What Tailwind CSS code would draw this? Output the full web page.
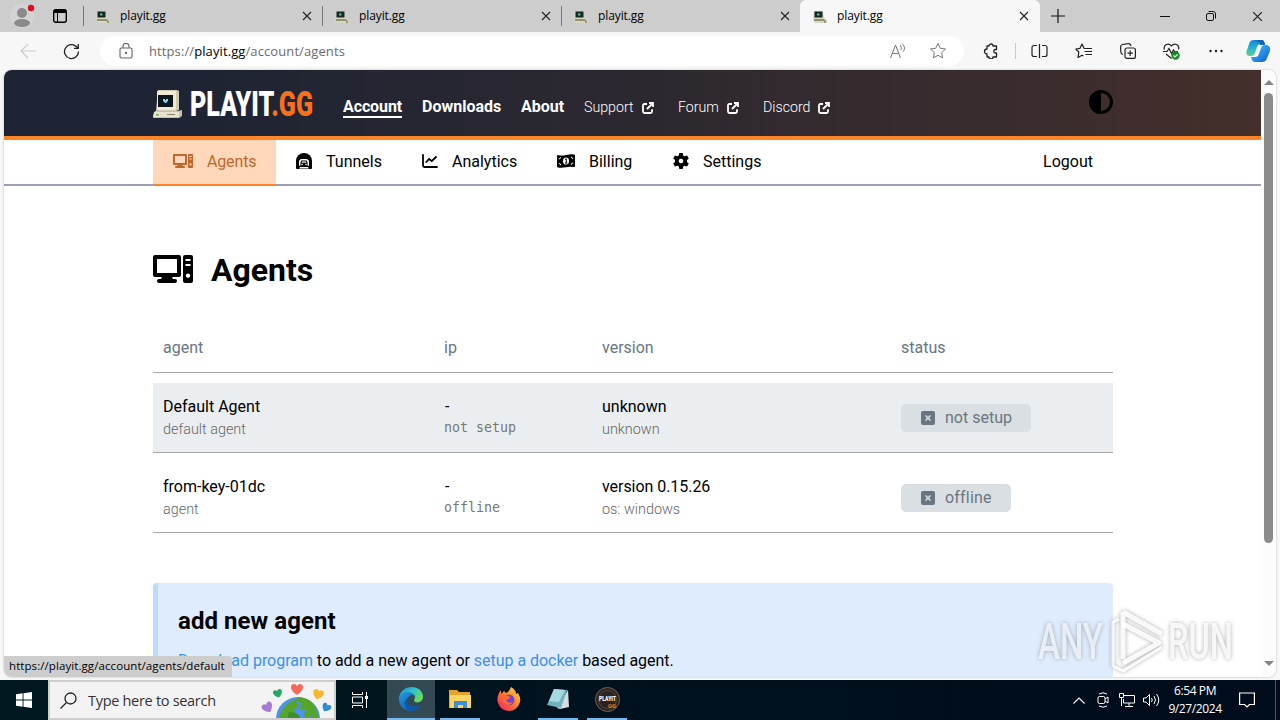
<!DOCTYPE html>
<html lang="en">
<head>
  <meta charset="UTF-8">
  <meta name="viewport" content="width=device-width, initial-scale=1.0">
  <script src="https://cdn.jsdelivr.net/npm/@tailwindcss/browser@4"></script>
  <title>playit.gg</title>
</head>
<body class="w-[1280px] h-[720px] overflow-hidden bg-[#f7f7f7] font-['Roboto',sans-serif] text-black">

  <!-- shared icons -->
  <svg class="hidden">
    <symbol id="computer" viewBox="0 0 40 28">
      <path fill-rule="evenodd" d="M2 0h24a2 2 0 0 1 2 2v18a2 2 0 0 1-2 2h-7l1 2h2a2 2 0 0 1 0 4H6a2 2 0 0 1 0-4h2l1-2H2a2 2 0 0 1-2-2V2a2 2 0 0 1 2-2zM4 4v14h20V4zM32 0h6a2 2 0 0 1 2 2v24a2 2 0 0 1-2 2h-6a2 2 0 0 1-2-2V2a2 2 0 0 1 2-2zM32.500 4v2h5V4zM32.500 9v2h5V9zM35 18.500a2.200 2.200 0 1 0 .01 0z" fill="currentColor"/>
    </symbol>
    <symbol id="external" viewBox="0 0 12 12">
      <path d="M5 2H2.500Q1 2 1 3.500V9.500Q1 11 2.500 11H8.500Q10 11 10 9.500V7.300M7 1h4v4M11 1L5 7" fill="none" stroke="currentColor" stroke-width="1.800"/>
    </symbol>
    <symbol id="retro" viewBox="0 0 30 28">
      <path d="M5 0h19l2 1v19l-3 1H3z" fill="#cfc8b2"/>
      <path d="M4 1h19v19H4z" fill="#efe9d6"/>
      <path d="M5 5h15v12H5z" fill="#0d161d"/>
      <path d="M10 9h2v1h1v-1h2v2l-2 2h-1l-2-2z" fill="#7fd4ee"/>
      <path d="M2 21h23l4-1v6l-3 2H0l1-5z" fill="#c9c2aa"/>
      <path d="M1 22h25v5H0z" fill="#e9e3cf"/>
      <path d="M3 24h3v1.500H3z" fill="#6fae4e"/>
      <path d="M14 24h8v1h-8z" fill="#8b856f"/>
    </symbol>
    <symbol id="tabicon" viewBox="0 0 14 13">
      <path d="M1 1h9l1 7 3 2v3H2l-2-3z" fill="#d9d6c0"/>
      <path d="M1.500 1.500h8v6h-8z" fill="#12291f"/>
      <path d="M4 3.500h2.500v2H4z" fill="#6fb7a8"/>
      <path d="M1 9h10v2H1z" fill="#8d9278"/>
      <path d="M11 9l2 2v2h-2z" fill="#9b977d"/>
    </symbol>
    <symbol id="close" viewBox="0 0 10 10">
      <path d="M1 1l8 8M9 1L1 9" fill="none" stroke="#222" stroke-width="1.100"/>
    </symbol>
    <symbol id="xmark" viewBox="0 0 14 14">
      <rect width="14" height="14" rx="2" fill="#697681"/>
      <path d="M4.500 4.500l5 5M9.500 4.500l-5 5" stroke="#dce2e7" stroke-width="1.500"/>
    </symbol>
  </svg>

  <!-- tab strip -->
  <div class="flex h-8 bg-[#cdcdcd] font-['Open_Sans',sans-serif] text-[12px] tracking-[-0.1px]">
    <div class="w-[44px] flex items-center justify-end pr-[8px]">
      <svg class="w-7 h-8" viewBox="0 0 28 32">
        <circle cx="14" cy="16" r="12" fill="#d4d4d4"/>
        <circle cx="14" cy="13" r="5" fill="#8a8a8a"/><ellipse cx="14" cy="23" rx="8" ry="4" fill="#8a8a8a"/>
        <circle cx="23" cy="8" r="3.200" fill="#e00b1c"/>
      </svg>
    </div>
    <div class="w-[39px] flex items-center pl-[9px]">
      <svg class="w-[14px] h-[14px]" viewBox="0 0 14 14" fill="none" stroke="#000"><rect x=".7" y=".7" width="12.600" height="12.600" rx="2" stroke-width="1.400"/><path d="M1 2.500h12" stroke-width="3"/><path d="M4.500 3v10"/></svg>
    </div>
    <div class="w-[239px] flex items-center pl-[13px] pr-[10px] relative">
      <i class="absolute left-0 top-[6px] w-px h-5 bg-[#777]"></i>
      <svg class="w-[14px] h-[13px] mr-[10px]"><use href="#tabicon"/></svg>playit.gg<svg class="w-[10px] h-[10px] ml-auto"><use href="#close"/></svg>
    </div>
    <div class="w-[239px] flex items-center pl-[13px] pr-[10px] relative">
      <i class="absolute left-0 top-[6px] w-px h-5 bg-[#777]"></i>
      <svg class="w-[14px] h-[13px] mr-[10px]"><use href="#tabicon"/></svg>playit.gg<svg class="w-[10px] h-[10px] ml-auto"><use href="#close"/></svg>
    </div>
    <div class="w-[239px] flex items-center pl-[13px] pr-[10px] relative">
      <i class="absolute left-0 top-[6px] w-px h-5 bg-[#777]"></i>
      <svg class="w-[14px] h-[13px] mr-[10px]"><use href="#tabicon"/></svg>playit.gg<svg class="w-[10px] h-[10px] ml-auto"><use href="#close"/></svg>
    </div>
    <div class="w-[240px] flex items-center pl-[13px] pr-[11px] bg-[#f7f7f7] rounded-t-md">
      <svg class="w-[14px] h-[13px] mr-[10px]"><use href="#tabicon"/></svg>playit.gg<svg class="w-[10px] h-[10px] ml-auto"><use href="#close"/></svg>
    </div>
    <div class="w-9 flex items-center justify-center">
      <svg class="w-[14px] h-[14px]" viewBox="0 0 14 14" stroke="#111" stroke-width="1.200"><path d="M7 0v14M0 7h14"/></svg>
    </div>
    <div class="ml-auto flex">
      <div class="w-[46px] grid place-items-center"><svg class="w-[10px] h-[10px]" viewBox="0 0 10 10"><path d="M0 5.500h10" stroke="#111"/></svg></div>
      <div class="w-[46px] grid place-items-center"><svg class="w-[10px] h-[10px]" viewBox="0 0 10 10" fill="none" stroke="#111"><rect x=".5" y="2.500" width="7" height="7" rx="1.500"/><path d="M2.500.5H7A2.500 2.500 0 0 1 9.500 3v4.500"/></svg></div>
      <div class="w-[46px] grid place-items-center"><svg class="w-[11px] h-[11px]"><use href="#close"/></svg></div>
    </div>
  </div>

  <!-- toolbar -->
  <div class="flex h-[38px] items-center bg-[#f7f7f7]">
    <div class="w-[50px] grid place-items-center pl-[6px]"><svg class="w-4 h-4" viewBox="0 0 16 16" fill="none" stroke="#cbcbcb" stroke-width="1.200"><path d="M16 8H1M8 1L1 8l7 7"/></svg></div>
    <div class="w-[43px] grid place-items-center"><svg class="w-[17px] h-[17px]" viewBox="0 0 17 17" fill="none" stroke="#222" stroke-width="1.300"><path d="M15.500 8.500A7 7 0 1 1 13 3.200L15 5M15.300 1v4.300H11"/></svg></div>
    <div class="ml-[7px] w-[864px] h-[30px] rounded-full bg-white flex items-center pl-[19px] pr-[17px]">
      <svg class="w-[14px] h-4" viewBox="0 0 14 16" fill="none" stroke="#666" stroke-width="1.100"><rect x="1" y="5" width="12" height="10" rx="1.500"/><path d="M4 5V3.500a3 3 0 0 1 6 0V5"/><circle cx="7" cy="10" r=".6" fill="#666"/></svg>
      <span class="ml-4 pt-px font-['Open_Sans',sans-serif] text-[13px] tracking-[0.1px] text-[#6c6c6c]">https://<span class="text-black">playit.gg</span>/account/agents</span>
      <svg class="ml-auto w-4 h-4" viewBox="0 0 16 16" fill="none" stroke="#777"><path d="M.5 15L5.500 2l5 13M2.200 10.500h6.600M10 2q2 2 1 5M12 .5q4 3.500 1.500 8"/></svg>
      <svg class="ml-[23px] w-[18px] h-[18px]" viewBox="0 0 18 18" fill="none" stroke="#777" stroke-linejoin="round"><path d="M9 1.500l2.300 4.800 5.200.7-3.800 3.600 1 5.300L9 13.300l-4.700 2.600 1-5.300L1.500 7l5.200-.7z"/></svg>
    </div>
    <div class="w-[50px] grid place-items-center pl-[4px]"><svg class="w-4 h-4" viewBox="0 0 16 16" fill="none" stroke="#222" stroke-width="1.300" stroke-linejoin="round"><path d="M4 3h2a2 2 0 0 1 4 0h3.500v3.500h-1a1.700 1.700 0 0 0 0 3.500h1v4H10a2 2 0 0 1-4 0H4v-3a2.500 2.500 0 1 1 0-5z"/></svg></div>
    <div class="w-px h-4 bg-[#c8c8c8] ml-px"></div>
    <div class="w-[46px] grid place-items-center"><svg class="w-[17px] h-[14px]" viewBox="0 0 17 14" fill="none" stroke="#222" stroke-width="1.200"><path d="M6 1.500H3a2 2 0 0 0-2 2v7a2 2 0 0 0 2 2h3M11 1.500h3a2 2 0 0 1 2 2v7a2 2 0 0 1-2 2h-3M8.500 0v14"/></svg></div>
    <div class="w-[43px] grid place-items-center"><svg class="w-[17px] h-4" viewBox="0 0 17 16" fill="none" stroke="#222" stroke-width="1.200" stroke-linejoin="round"><path d="M10 5.500L9 5.300 7 1 5 5.300.8 6l3 3-.8 5.500 4-2.300 1.500.8M10 5.500h7M9.500 8.500H17M10.500 11.500H17"/></svg></div>
    <div class="w-[45px] grid place-items-center"><svg class="w-4 h-4" viewBox="0 0 16 16" fill="none" stroke="#222" stroke-width="1.200"><rect x="5" y="5" width="10.400" height="10.400" rx="2"/><path d="M10.200 7.500v5.400M7.500 10.200h5.400M3 11.500A3 3 0 0 1 .8 9l-.2-5a2.500 2.500 0 0 1 2-2.500L8 .7A2.500 2.500 0 0 1 11 3"/></svg></div>
    <div class="w-[44px] grid place-items-center"><svg class="w-[18px] h-[17px]" viewBox="0 0 18 17" fill="none" stroke="#222" stroke-width="1.200"><path d="M1.500 6.500C0 2 5.500-1 8.500 3c3-4 8.500-1 7 3.500M0 8.500h4l2-3 2.500 5 2-3.500 1 1.500H15M3 11l5.500 4.500"/><circle cx="12.500" cy="12.500" r="4.200" fill="#168a25" stroke="none"/><path d="M10.500 12.500l1.500 1.500 2.600-2.600" stroke="#fff"/></svg></div>
    <div class="w-[43px] grid place-items-center"><svg class="w-[14px] h-1" viewBox="0 0 14 4" fill="#222"><circle cx="1.500" cy="2" r="1.200"/><circle cx="7" cy="2" r="1.200"/><circle cx="12.500" cy="2" r="1.200"/></svg></div>
    <svg class="w-6 h-6 ml-[9px]" viewBox="0 0 24 24">
      <defs>
        <linearGradient id="cp1" x2="0" y2="1"><stop stop-color="#1681dc"/><stop offset=".5" stop-color="#25b5d0"/><stop offset="1" stop-color="#5fd18a"/></linearGradient>
        <linearGradient id="cp2" x2="1" y2="1"><stop stop-color="#52c4f2"/><stop offset=".6" stop-color="#2186ea"/><stop offset="1" stop-color="#1158c9"/></linearGradient>
      </defs>
      <path d="M8 1h8q2 0 3 4h-5q-2 0-3 3l-2 6q-1 3-4 3H3q-4-1-2-6l2-6q1-4 5-4z" fill="url(#cp1)"/>
      <path d="M16 23H9q-3 0-4-5h5q2 0 3-3l2-6q1-3 4-3h2q4 1 3 6l-3 7q-1 4-5 4z" fill="url(#cp2)"/>
      <path d="M8 1h8q2 0 3 5h-5q-1-5-6-5z" fill="#1363b9"/>
    </svg>
  </div>

  <!-- browser viewport -->
  <div class="relative flex h-[607px] mx-[4px] rounded-lg overflow-hidden bg-white shadow-[0_0_2px_#aaa]">
    <div class="w-[1257px] shrink-0">
      <header class="h-[70px] border-b-4 border-[#ff8427] bg-linear-to-r from-[#1e2433] from-15% via-[#2c2830] via-50% to-[#432f2b]">
        <div class="w-[960px] mx-auto h-[66px] flex items-center text-white relative left-[0.5px]">
          <svg class="w-[30px] h-7 mt-[2px]"><use href="#retro"/></svg>
          <svg class="w-[128px] h-[36px] ml-[7px] -mr-1 mt-[2px]" viewBox="0 0 128 36" font-family="Roboto" font-weight="900" font-size="35">
            <text x="0" y="30" fill="#fff" textLength="123" lengthAdjust="spacingAndGlyphs">PLAYIT<tspan fill="#f8701c">.GG</tspan></text>
          </svg>
          <nav class="flex items-center ml-[29px] pt-[8px] font-bold text-base">
            <a class="w-[59px] leading-[23px] h-[23px] border-b-2 border-white whitespace-nowrap tracking-[-0.1px]">Account</a>
            <a class="ml-5 w-[79px] leading-[23px] whitespace-nowrap">Downloads</a>
            <a class="ml-5 w-[43px] leading-[23px] whitespace-nowrap">About</a>
            <a class="ml-5 w-[74px] mt-[2px] flex items-center font-light text-[14.2px]">Support<svg class="w-3 h-3 ml-2"><use href="#external"/></svg></a>
            <a class="ml-5 w-[65px] mt-[2px] flex items-center font-light text-[14.2px]">Forum<svg class="w-3 h-3 ml-2"><use href="#external"/></svg></a>
            <a class="ml-5 mt-[2px] flex items-center font-light text-[14.2px]">Discord<svg class="w-3 h-3 ml-2"><use href="#external"/></svg></a>
          </nav>
          <svg class="ml-auto w-6 h-6 mb-[2px]" viewBox="0 0 24 24"><circle cx="12" cy="12" r="10.500" fill="none" stroke="#000" stroke-width="3"/><path d="M12 0a12 12 0 0 0 0 24z"/></svg>
        </div>
      </header>

      <nav class="h-[46px] border-b-2 border-[#9b9fb0]">
        <div class="w-[960px] mx-auto h-[46px] flex text-base relative left-[0.5px] leading-[43px]">
          <a class="w-[123px] pl-5 pb-[2px] flex items-center bg-[#ffd7bb] text-[#c0682b] border-b-2 border-[#ff8427] tracking-[-0.15px]"><svg class="w-5 h-[14px] mr-[14px]"><use href="#computer"/></svg>Agents</a>
          <a class="w-[126px] pl-5 pb-[4px] flex items-center">
            <svg class="w-4 h-4 mr-[14px]" viewBox="0 0 16 16"><path d="M0 15V8a8 8 0 0 1 16 0v7q0 1-1 1H1q-1 0-1-1z"/><path d="M3 13V9q0-3 3-3h4q3 0 3 3v4l-1.500-.7V9L10.500 7.500h-5L4.500 9v3.300z" fill="#fff"/><path d="M6 8.500h4l.5 1.200h-5zM3 15.500l1-1.500h8l1 1.500z" fill="#fff"/><circle cx="6" cy="11.500" r=".8" fill="#fff"/><circle cx="10" cy="11.500" r=".8" fill="#fff"/></svg>Tunnels</a>
          <a class="w-[135px] pl-5 pb-[4px] flex items-center">
            <svg class="w-4 h-[14px] mr-[14px]" viewBox="0 0 16 14" fill="none" stroke="#000" stroke-width="1.800" stroke-linecap="round" stroke-linejoin="round"><path d="M1 1v10.500Q1 13 2.500 13H15M4.200 8l3-3.200 2.500 2.400L14 3"/></svg>Analytics</a>
          <a class="w-[116px] pl-[20px] pb-[4px] flex items-center">
            <svg class="w-[18px] h-[14px] mr-[14px]" viewBox="0 0 18 14"><path d="M0 2q0-1 1-1 4 1 8 0t8-.6q1 0 1 1V12q0 1-1 1-4-.8-8 .2-4 .8-8 .3-1 0-1-1z"/><path d="M1.800 5q1.800 0 1.800-1.700M1.800 9.500q2 0 2 1.800M16.200 4.500q-1.800 0-1.800-1.800M16.200 9q-2 0-2 1.800" stroke="#fff" fill="none"/><ellipse cx="9" cy="7" rx="3" ry="3.600" fill="#fff"/><path d="M8 5.500l1.300-.7v4M8 9h2.400" stroke="#000" fill="none"/></svg>Billing</a>
          <a class="pl-5 pb-[4px] flex items-center">
            <svg class="w-4 h-4 mr-[14px]" viewBox="0 0 16 16"><path fill-rule="evenodd" d="M6.300 0h3.400l.5 2.400 1.500.9 2.400-.8 1.700 2.900L14 7.100v1.800l1.800 1.700-1.700 2.900-2.400-.8-1.500.9-.5 2.400H6.300l-.5-2.400-1.500-.9-2.400.8-1.700-2.900L2 8.900V7.100L.2 5.400l1.700-2.900 2.400.8 1.500-.9zM8 5.700a2.300 2.300 0 1 0 .01 0z"/></svg>Settings</a>
          <a class="ml-auto pr-5 pb-[4px] flex items-center">Logout</a>
        </div>
      </nav>

      <main class="w-[960px] mx-auto relative left-[0.5px]">
        <h1 class="pt-[64px] flex items-center text-[32px] leading-10 font-bold"><svg class="w-10 h-7 mr-[18px] mb-[2px]"><use href="#computer"/></svg>Agents</h1>

        <div class="mt-[33px] h-[50px] grid grid-cols-[281px_158px_299px_222px] border-b border-[#a8a8a8] text-base leading-[49px] text-[#697681]">
          <div class="pl-[10px]">agent</div><div class="pl-[10px]">ip</div><div class="pl-[10px]">version</div><div class="pl-[10px]">status</div>
        </div>

        <div class="mt-[10px] h-[70px] grid grid-cols-[281px_158px_299px_222px] items-center border-b border-[#a8a8a8] bg-[#ebeef0]">
          <div class="pl-[10px]"><p class="leading-6">Default Agent</p><p class="text-[14.4px] leading-[22px] font-light text-[#666]">default agent</p></div>
          <div class="pl-[10px] pb-[2px]"><p class="leading-[26px] pl-px">-</p><p class="font-['DejaVu_Sans_Mono',monospace] text-[13.3px] leading-4 text-[#777] pb-[4px]">not setup</p></div>
          <div class="pl-[10px]"><p class="leading-6">unknown</p><p class="text-[14.4px] leading-[22px] font-light text-[#666]">unknown</p></div>
          <div class="pl-[10px]"><span class="flex items-center w-[130px] h-7 pl-5 rounded-[5px] bg-[#dadfe3] text-[#697681]"><svg class="w-[14px] h-[14px] mr-[10px]"><use href="#xmark"/></svg>not setup</span></div>
        </div>

        <div class="mt-[10px] h-[70px] grid grid-cols-[281px_158px_299px_222px] items-center border-b border-[#a8a8a8]">
          <div class="pl-[10px]"><p class="leading-6">from-key-01dc</p><p class="text-[14.4px] leading-[22px] font-light text-[#666]">agent</p></div>
          <div class="pl-[10px] pb-[2px]"><p class="leading-[26px] pl-px">-</p><p class="font-['DejaVu_Sans_Mono',monospace] text-[13.3px] leading-4 text-[#777] pb-[4px]">offline</p></div>
          <div class="pl-[10px]"><p class="leading-6 tracking-[-0.05px]">version 0.15.26</p><p class="text-[14.4px] leading-[22px] font-light text-[#666]">os: windows</p></div>
          <div class="pl-[10px]"><span class="flex items-center w-[110px] h-7 pl-5 rounded-[5px] bg-[#dadfe3] text-[#697681] tracking-[0.2px]"><svg class="w-[14px] h-[14px] mr-[10px]"><use href="#xmark"/></svg>offline</span></div>
        </div>

        <section class="mt-[50px] h-[130px] pl-5 pt-[22px] border-l-[5px] border-[#bcdbfd] bg-[#dfecfe] rounded-sm">
          <h2 class="text-2xl leading-8 font-bold tracking-[0.06px]">add new agent</h2>
          <p class="mt-[12px] leading-6 tracking-[-0.03px]"><a class="text-[#3f8fe8]">Download program</a> to add a new agent or <a class="text-[#3f8fe8]">setup a docker</a> based agent.</p>
        </section>
      </main>
    </div>

    <!-- scrollbar -->
    <div class="w-[15px] flex flex-col items-center bg-[#fcfcfc] pt-[10px] pb-[11px]">
      <svg class="w-[10px] h-[5px]" viewBox="0 0 10 5"><path d="M5 0l5 5H0z" fill="#858585"/></svg>
      <div class="mt-[8px] w-[9px] h-[450px] rounded-full bg-[#8b8b8b]"></div>
      <svg class="w-[10px] h-[5px] mt-auto" viewBox="0 0 10 5"><path d="M5 5l5-5H0z" fill="#858585"/></svg>
    </div>

    <!-- link preview -->
    <div class="absolute left-0 bottom-0 w-[228px] h-[21px] pl-[5px] rounded-tr bg-[#cdcdcd] font-['Open_Sans',sans-serif] text-[11.5px] tracking-[0.08px] leading-[20px] whitespace-nowrap">https://playit.gg/account/agents/default</div>
  </div>

  <!-- watermark -->
  <svg class="absolute left-[1030px] top-[600px] w-[210px] h-[75px] drop-shadow-[0_0_2px_#666]" viewBox="0 0 210 75" opacity=".6">
    <g font-family="Roboto" font-weight="500" font-size="50" fill="#fff" fill-opacity=".85">
      <text x="8" y="59" textLength="65" lengthAdjust="spacingAndGlyphs">ANY</text>
      <text x="138" y="59" textLength="65" lengthAdjust="spacingAndGlyphs">RUN</text>
    </g>
    <g fill="none" stroke="#fff" stroke-linejoin="round" stroke-opacity=".9">
      <path d="M93 12v47M93 12l39 22" stroke-width="5"/>
      <path d="M93 24l36 19L93 63" stroke-width="5"/>
      <path d="M89 19l-6 3v44l10 5 39-24" stroke-width="3"/>
    </g>
  </svg>

  <!-- taskbar -->
  <div class="mt-[3px] h-10 flex items-stretch bg-linear-to-r from-[#001820] to-[#000b1b] text-white font-['Open_Sans',sans-serif]">
    <div class="w-[48px] grid place-items-center"><svg class="w-4 h-4" viewBox="0 0 16 16" fill="#fff"><path d="M0 2.200L6.600 1.300V7.500H0zM7.500 1.200L16 0v7.500H7.500zM0 8.400h6.600v6.300L0 13.800zM7.500 8.400H16V16l-8.500-1.200z"/></svg></div>
    <div class="w-[288px] flex items-center border-2 border-[#cfcfcf] bg-[#f3f3f3] pl-[10px] text-[#333] text-[14.5px]">
      <svg class="w-[17px] h-[17px] mr-[11px]" viewBox="0 0 17 17" fill="none" stroke="#222" stroke-width="1.300"><circle cx="10.500" cy="6.500" r="5.500"/><path d="M6.500 10.500L.5 16.500"/></svg>
      <span class="whitespace-nowrap tracking-[-0.3px] pt-[2px]">Type here to search</span>
      <svg class="ml-auto w-[76px] h-9 -mr-px" viewBox="0 0 76 36">
        <defs>
          <clipPath id="globe"><circle cx="39" cy="37" r="22"/></clipPath>
          <path id="heart" d="M0 5C-8 0-7-6-3-6Q-1-6 0-4 1-6 3-6C7-6 8 0 0 5z"/>
        </defs>
        <circle cx="39" cy="37" r="22" fill="#4c93ea"/>
        <g clip-path="url(#globe)"><path d="M23 28q6-9 16-12l-2 5 4 2-6 5 1 4-7 1-3 5-6-3zM38 15q13 0 18 9l5 15h-8l-1-5-5 2-3-4 4-3-8-2 3-5-4-3z" fill="#55a52a"/><path d="M30 30q9-1 12 7H28z" fill="#3f8f27"/></g>
        <use href="#heart" x="38" y="8" fill="#f4695a"/>
        <use href="#heart" fill="#f8b82b" transform="translate(59 13) rotate(15) scale(.9)"/>
        <use href="#heart" fill="#26a765" transform="translate(19 12) rotate(-15) scale(.75)"/>
        <use href="#heart" fill="#a779d4" transform="translate(9 26) rotate(-30) scale(.9)"/>
        <use href="#heart" fill="#3188d8" transform="translate(67 26) rotate(30) scale(.75)"/>
      </svg>
    </div>
    <div class="w-[48px] grid place-items-center"><svg class="w-4 h-4" viewBox="0 0 16 16" fill="none" stroke="#fff"><path d="M.5 0v2.500h10V0M.5 16v-2.500h10V16M.5 5h10v6H.5zM14.500 0v16"/><path d="M13 4h3v3h-3z" fill="#fff" stroke="none"/></svg></div>
    <div class="ml-[3px] w-[48px] grid place-items-center bg-[#334a55] border-b-2 border-[#76b9ed]">
      <svg class="w-6 h-6" viewBox="0 0 24 24">
        <defs>
          <linearGradient id="e1" x2="1" y2=".6"><stop stop-color="#1b86d8"/><stop offset=".5" stop-color="#2ec0d0"/><stop offset="1" stop-color="#6bdc55"/></linearGradient>
          <linearGradient id="e2" x2="1" y2="1"><stop stop-color="#249be6"/><stop offset="1" stop-color="#0c4b9c"/></linearGradient>
        </defs>
        <path d="M0 12C1-4 24-3 24 10c0 6-9 7-9 3 0-1 1-1 1-3 0-5-11-7-16 2z" fill="url(#e1)"/>
        <path d="M0 12c0-8 14-9 16-3-4-3-8 1-8 5 0 5 7 8 14 4-3 5-7 6-10 6-7 0-12-5-12-12z" fill="url(#e2)"/>
        <path d="M10 10c-6 5 1 13 12 8-3 5-8 6-10 6C5 22 3 13 10 10z" fill="#0f58a8"/>
      </svg>
    </div>
    <div class="ml-[5px] w-10 grid place-items-center border-b-2 border-[#76b9ed]">
      <svg class="w-[22px] h-[20px]" viewBox="0 0 22 20"><path d="M0 1h8l2 2h11v16H0z" fill="#e5a52c"/><path d="M1 6h21v13H1z" fill="#fcd462"/><path d="M5 19v-7h13v7h-4v-3H9v3z" fill="#3d8fd3"/></svg>
    </div>
    <div class="ml-[4px] w-[49px] grid place-items-center pb-[2px]">
      <svg class="w-6 h-6" viewBox="0 0 24 24">
        <defs><linearGradient id="ff" x1="1" x2=".1" y2="1"><stop stop-color="#ffe04a"/><stop offset=".45" stop-color="#ff8a24"/><stop offset="1" stop-color="#ed1f6a"/></linearGradient></defs>
        <path d="M14 0q5 3 5 7l2-1q3 5 2 9-3 9-11 9T1 16Q-1 9 4 3v4l3-3 2 2q3-1 5-6z" fill="url(#ff)"/>
        <circle cx="12" cy="13" r="5.500" fill="#7244d2"/><path d="M5 9q5-2 8 1-1 3-4 3 2 4 7 2-3 5-8 2-3-3-3-8z" fill="#ff6a30"/>
      </svg>
    </div>
    <div class="ml-[5px] w-10 grid place-items-center border-b-2 border-[#76b9ed]">
      <svg class="w-6 h-[22px]" viewBox="0 0 24 22"><path d="M22 2l1 17-9 2-3-1z" fill="#d8dcde"/><path d="M8 1l13 1-6 18-14-3z" fill="#6db4bf"/><path d="M8 1l11 1-6 12-10-1z" fill="#a5dae0"/></svg>
    </div>
    <div class="ml-[9px] w-10 grid place-items-center border-b-2 border-[#76b9ed]">
      <svg class="w-[25px] h-[25px]" viewBox="0 0 25 25"><circle cx="12.500" cy="12.500" r="12" fill="#292423" stroke="#78604e"/><circle cx="12.500" cy="12.500" r="9" fill="none" stroke="#51443c"/><text x="4" y="14" font-family="Roboto" font-weight="900" font-size="7" fill="#fff" textLength="17" lengthAdjust="spacingAndGlyphs">PLAYIT</text><text x="13" y="20.500" font-family="Roboto" font-weight="900" font-size="6" fill="#e8711e" textLength="8" lengthAdjust="spacingAndGlyphs">GG</text></svg>
    </div>

    <div class="ml-auto flex items-center">
      <svg class="w-3 h-[7px]" viewBox="0 0 12 7" fill="none" stroke="#fff" stroke-width="1.200"><path d="M.5 6.500L6 1l5.500 5.500"/></svg>
      <svg class="w-3 h-4 ml-[12px]" viewBox="0 0 12 16" fill="none" stroke="#fff"><rect x="1" y="4.500" width="7" height="7" rx="1.500"/><path d="M8 7l3-2v6L8 9M2 2q4-2.500 8 0M2 14q4 2.500 8 0"/></svg>
      <svg class="w-4 h-[14px] ml-[10px]" viewBox="0 0 16 14" fill="none" stroke="#fff"><path d="M5 2.500h10.500v7.500H4.500V6M10 10v3M6 13.500h8M.5.500h4v4h-4zM2.500 4.500V13"/></svg>
      <svg class="w-[17px] h-[14px] ml-[8px]" viewBox="0 0 17 14" fill="none" stroke="#fff"><path d="M.5 5h2.500l3.500-3.500v11L3 9H.5zM8.500 5q1.500 2 0 4M11 3q3 4 0 8M13.500 1q4.500 6 0 12"/></svg>
      <div class="w-[62px] ml-[4px] text-center text-[12px] leading-[18px] tracking-[-0.4px]">6:54 PM<br>9/27/2024</div>
      <svg class="w-4 h-4 ml-[13px]" viewBox="0 0 16 16" fill="none" stroke="#fff" stroke-width="1.200"><path d="M.6 1h14.800v11.500H10.500L8 15l-2.500-2.500H.6z"/></svg>
      <div class="ml-5 mr-1 w-px h-10 bg-[#4a535c]"></div>
    </div>
  </div>
</body>
</html>
